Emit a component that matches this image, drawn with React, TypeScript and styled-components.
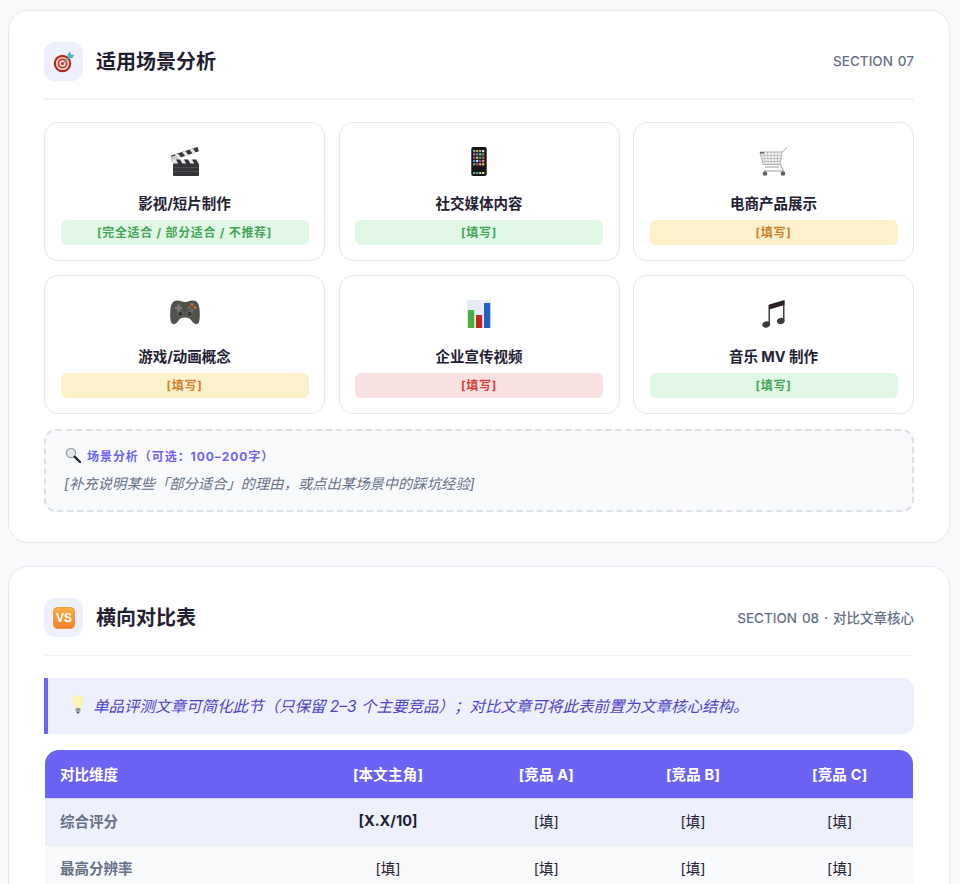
import * as React from 'react'
import styled, { createGlobalStyle } from 'styled-components'

const GlobalStyle = createGlobalStyle`
  html, body {
    margin: 0;
    height: 884px;
    overflow: hidden;
    background: #f8f9fb;
  }
  body {
    font-family: Inter, "Noto Sans CJK SC", sans-serif;
    color: #1f2133;
  }
`

const Page = styled.div`
  display: flex;
  flex-direction: column;
  gap: 23px;
  padding: 10px 10px 0 8px;
`

const Card = styled.section`
  background: #fff;
  border: 1px solid #e6e9f1;
  border-radius: 20px;
  padding: 31px 35px 30px;
`

const Header = styled.header`
  display: flex;
  align-items: center;
  gap: 13px;
  padding-bottom: 17px;
  border-bottom: 2px solid #f1f3f7;
  margin-bottom: 22px;
`

const HeaderThin = styled(Header)`
  padding-bottom: 17.5px;
  border-bottom-width: 1.5px;
`

const IconBox = styled.div`
  width: 39px;
  height: 39px;
  border-radius: 11px;
  background: #eef0fd;
  display: flex;
  align-items: center;
  justify-content: center;
`

const Title = styled.h2`
  margin: 0;
  padding-top: 2px;
  font-size: 20px;
  line-height: 37px;
  font-weight: 700;
  color: #1f2133;
`

const SectionTag = styled.span`
  margin-left: auto;
  padding-bottom: 2px;
  font-size: 13.5px;
  font-weight: 500;
  word-spacing: 1.3px;
  color: #667087;
`

const SceneGrid = styled.div`
  display: grid;
  grid-template-columns: repeat(3, 1fr);
  gap: 13.5px;
`

const SceneCard = styled.div`
  border: 1px solid #e6e9f1;
  border-radius: 14px;
  height: 139px;
  box-sizing: border-box;
  padding: 24px 15.5px 0;
  display: flex;
  flex-direction: column;
  align-items: center;
`

const SceneIcon = styled.div`
  width: 30px;
  height: 30px;
  display: flex;
  align-items: flex-start;
  justify-content: center;
`

const SceneName = styled.div`
  margin-top: 17px;
  font-size: 14.5px;
  line-height: 20px;
  font-weight: 700;
  color: #1f2133;
`

const tones = {
  good: { bg: '#e1f8e7', fg: '#46a558' },
  mid: { bg: '#fdf1cc', fg: '#d0812c' },
  bad: { bg: '#f9e1e1', fg: '#d83f3f' },
}

type Tone = keyof typeof tones

const Badge = styled.div<{ $tone: Tone }>`
  margin-top: 6px;
  align-self: stretch;
  height: 25px;
  line-height: 25px;
  border-radius: 6px;
  text-align: center;
  font-size: 12px;
  font-weight: 700;
  letter-spacing: 0.7px;
  background: ${p => tones[p.$tone].bg};
  color: ${p => tones[p.$tone].fg};
`

const Note = styled.div`
  margin-top: 15.5px;
  height: 83px;
  box-sizing: border-box;
  border: 2px dashed #dde0e9;
  border-radius: 12px;
  background: #f9fafc;
  padding: 14px 19px 0;
`

const NoteHead = styled.div`
  display: flex;
  align-items: center;
  gap: 6px;
  height: 20px;
  font-size: 12px;
  font-weight: 700;
  letter-spacing: 0.95px;
  color: #6c63f8;
`

const NoteBody = styled.div`
  margin: 8px 0 0 -1px;
  font-size: 14.3px;
  line-height: 22px;
  font-style: italic;
  color: #667087;
`

const Callout = styled.div`
  height: 56px;
  box-sizing: border-box;
  display: flex;
  align-items: center;
  gap: 9px;
  padding: 0 0 2px 24px;
  background: #eef0fd;
  border-left: 4.5px solid #6b63f6;
  border-radius: 0 12px 12px 0;
  font-size: 15.5px;
  font-style: italic;
  color: #4d44cc;
`

const TableWrap = styled.div`
  margin: 16px 1px 0;
  border-radius: 14px 14px 0 0;
  overflow: hidden;
`

const Table = styled.table`
  width: 100%;
  table-layout: fixed;
  border-collapse: separate;
  border-spacing: 0;
  font-size: 14.5px;
`

const HeadCell = styled.th`
  box-sizing: border-box;
  height: 49px;
  padding: 0 0 1px;
  background: #6b63f6;
  color: #fff;
  font-weight: 700;
  letter-spacing: 0.2px;
  text-align: center;
  border-bottom: 1px solid #d8d6fb;
`

const HeadFirst = styled(HeadCell)`
  padding-left: 15px;
  text-align: left;
  letter-spacing: 0;
`

const Row = styled.tr<{ $alt?: boolean }>`
  background: ${p => (p.$alt ? '#f9fafc' : '#eef0fc')};
`

const Cell = styled.td<{ $strong?: boolean }>`
  box-sizing: border-box;
  height: 47px;
  padding: 0 0 2px;
  text-align: center;
  color: #1f2133;
  font-weight: ${p => (p.$strong ? 700 : 400)};
  border-bottom: 1px solid #e6e9f1;
`

const RowLabel = styled.td`
  box-sizing: border-box;
  height: 47px;
  padding: 0 0 2px 15px;
  font-weight: 700;
  color: #667087;
  border-bottom: 1px solid #e6e9f1;
`

const TargetIcon = () => (
  <svg width="22" height="22" viewBox="0 0 22 22">
    <circle cx="9.5" cy="12.5" r="8.7" fill="#b8271f" />
    <circle cx="9.5" cy="12.5" r="6.6" fill="#efd9d0" />
    <circle cx="9.5" cy="12.5" r="5" fill="#cb3a31" />
    <circle cx="9.5" cy="12.5" r="3.2" fill="#f3e4dc" />
    <circle cx="9.5" cy="12.5" r="1.6" fill="#c5302a" />
    <path d="M10 12L18 5" stroke="#7f9296" strokeWidth="1.5" />
    <path d="M14.5 3.5L17 .5l1 3 3.5 .5-2.5 3.500-3.500-.5z" fill="#4db3bd" />
  </svg>
)

const VsIcon = () => (
  <svg width="22" height="22" viewBox="0 0 22 22">
    <defs>
      <linearGradient id="vsFill" x1="0" y1="0" x2="0" y2="1">
        <stop offset="0" stopColor="#fbb040" />
        <stop offset="1" stopColor="#f2812a" />
      </linearGradient>
    </defs>
    <rect x="0.5" y="0.5" width="21" height="21" rx="4" fill="url(#vsFill)" stroke="#e89a3c" />
    <text x="11" y="15.200" textAnchor="middle" fontSize="12" fontWeight="700" fontFamily="Liberation Sans, sans-serif" fill="#fff">VS</text>
  </svg>
)

const ClapperIcon = () => (
  <svg width="30" height="29" viewBox="0 0 30 29">
    <path d="M1 8.500L27.500 0l1.300 4.300L2.500 13.300z" fill="#37373b" />
    <path d="M4.500 7.400l3.300-1 3.400 4.200-3.300 1.100zM12 5l3.300-1 3.400 4.200-3.300 1.100zM19.500 2.600l3.300-1 3.400 4.200-3.300 1.100z" fill="#e4e4e4" />
    <circle cx="4.800" cy="12.500" r="3.800" fill="#c8cac8" />
    <rect x="3" y="12.500" width="26" height="4.500" fill="#e4e4e4" />
    <path d="M6 12.500h4l2.500 4.500h-4zM14 12.500h4l2.500 4.500h-4zM22 12.500h4l2.500 4.500h-4z" fill="#2f2f33" />
    <rect x="3" y="16.500" width="26" height="12.500" rx="1" fill="#343438" />
    <path d="M3 20.500h26M3 24.500h26" stroke="#5b5b60" strokeWidth="0.7" />
  </svg>
)

const appColors = [
  '#5fc0e8', '#e9a23b', '#6fcf6a', '#d9d9d9',
  '#f06292', '#4f8fe0', '#9ccc65', '#8d8d8d',
  '#ab47bc', '#f4c542', '#26a69a', '#ef5350',
  '#42a5f5', '#e0e0e0', '#7e57c2', '#ff8a65',
  '#66bb6a', '#ec407a', '#bdbdbd', '#ffca28',
]

const PhoneIcon = () => (
  <svg width="16" height="29" viewBox="0 0 16 29">
    <rect x="0.3" y="0" width="15.4" height="29" rx="2" fill="#17171a" />
    {appColors.map((color, i) => (
      <rect key={i} x={2.1 + (i % 4) * 3} y={3 + Math.floor(i / 4) * 3.3} width="2.2" height="2.2" fill={color} />
    ))}
    <rect x="2.1" y="25" width="2.2" height="2" fill="#66bb6a" />
    <rect x="5.1" y="25" width="2.2" height="2" fill="#42a5f5" />
    <rect x="8.1" y="25" width="2.2" height="2" fill="#ffca28" />
    <rect x="11.1" y="25" width="2.2" height="2" fill="#e0e0e0" />
  </svg>
)

const CartIcon = () => (
  <svg width="29" height="29" viewBox="0 0 29 29">
    <path d="M1 5h22l-2 12.500H4z" fill="#f2f2f2" stroke="#9a9a9a" strokeWidth="0.8" />
    <path d="M1.600 8.500h20.800M2.200 11.500h19.700M3 14.500h18.400M5 5l1 12.500M8.500 5l.7 12.500M12 5v12.500M15.500 5l-.4 12.500M19 5l-.8 12.500" stroke="#a8a8a8" strokeWidth="0.6" fill="none" />
    <path d="M23 5L28 0.500" stroke="#a8a8a8" strokeWidth="1" />
    <path d="M21 17.500c2 3 3 4 3 6.500H5M6 20h14" stroke="#9d9d9d" strokeWidth="1.100" fill="none" />
    <rect x="1" y="5" width="4" height="1.600" fill="#5a6a7a" />
    <circle cx="6" cy="26.500" r="2.300" fill="#66625e" />
    <circle cx="24" cy="26.500" r="2.300" fill="#66625e" />
  </svg>
)

const GamepadIcon = () => (
  <svg width="30" height="25" viewBox="0 0 30 25">
    <path d="M7.500 .5c3 0 4.500 1.500 7.500 1.500s4.500-1.500 7.500-1.500c4.500 0 6.500 3 7 8.500.5 5.500 .5 11.500-1 14-1.500 2-4.500 1.500-7-2.500-1.300-2-3-3-6.500-3s-5.200 1-6.500 3c-2.500 4-5.500 4.500-7 2.500-1.500-2.500-1.500-8.500-1-14 .5-5.500 2.500-8.500 7-8.500z" fill="#51514c" />
    <path d="M7.300 4.500h2.400v2.300H12v2.400H9.700v2.300H7.300V9.200H5V6.800h2.300z" fill="#7d7d78" />
    <circle cx="22" cy="4.600" r="1.500" fill="#d96a2b" />
    <circle cx="25" cy="7.500" r="1.500" fill="#d96a2b" />
    <circle cx="19.200" cy="7.500" r="1.500" fill="#73736e" />
    <circle cx="22" cy="10.300" r="1.500" fill="#73736e" />
    <circle cx="10.500" cy="14" r="2.700" fill="#35352f" stroke="#777772" strokeWidth="0.8" />
    <circle cx="19.500" cy="14" r="2.700" fill="#35352f" stroke="#777772" strokeWidth="0.8" />
  </svg>
)

const ChartIcon = () => (
  <svg width="24" height="28" viewBox="0 0 24 28">
    <rect x="0" y="0" width="24" height="28" fill="#e6eaf1" />
    <rect x="1" y="10" width="6.200" height="18" fill="#45b03e" />
    <rect x="9" y="15" width="6.200" height="13" fill="#c2281f" />
    <rect x="17" y="3" width="6.200" height="25" fill="#2160c4" />
  </svg>
)

const MusicIcon = () => (
  <svg width="23" height="28" viewBox="0 0 23 28">
    <path d="M7.200 4.500L22.500 0v5L7.200 9.500z" fill="#2a2226" />
    <path d="M7.200 5v19M21.800 1v19" stroke="#2a2226" strokeWidth="1.300" />
    <ellipse cx="4.200" cy="24.500" rx="3.900" ry="3" fill="#3a3a40" transform="rotate(-15 4.200 24.500)" />
    <ellipse cx="18.800" cy="21" rx="3.900" ry="3" fill="#3a3a40" transform="rotate(-15 18.800 21)" />
  </svg>
)

const LensIcon = () => (
  <svg width="16" height="16" viewBox="0 0 16 16">
    <circle cx="6" cy="6" r="4.600" fill="#dfe6ee" stroke="#9aa0a8" strokeWidth="1.300" />
    <path d="M9.800 9.800L15 15" stroke="#26262a" strokeWidth="2.400" strokeLinecap="round" />
  </svg>
)

const BulbIcon = () => (
  <svg width="12" height="19" viewBox="0 0 12 19">
    <path d="M6 .5c3.200 0 5.500 2.300 5.500 5.300 0 2.700-2.200 4.200-2.800 7H3.300C2.700 10 .5 8.500 .5 5.800 .5 2.800 2.800 .5 6 .5z" fill="#fdf3b4" stroke="#f1e6a2" strokeWidth="0.500" />
    <rect x="3.500" y="13" width="5" height="3.500" rx="1" fill="#9a9a9e" />
    <rect x="4.600" y="16.500" width="2.800" height="2" rx="1" fill="#55555a" />
  </svg>
)

type Scene = { name: string, status: string, tone: Tone, icon: React.ReactNode }

const scenes: Scene[] = [
  { name: '影视/短片制作', status: '[完全适合 / 部分适合 / 不推荐]', tone: 'good', icon: <ClapperIcon /> },
  { name: '社交媒体内容', status: '[填写]', tone: 'good', icon: <PhoneIcon /> },
  { name: '电商产品展示', status: '[填写]', tone: 'mid', icon: <CartIcon /> },
  { name: '游戏/动画概念', status: '[填写]', tone: 'mid', icon: <GamepadIcon /> },
  { name: '企业宣传视频', status: '[填写]', tone: 'bad', icon: <ChartIcon /> },
  { name: '音乐 MV 制作', status: '[填写]', tone: 'good', icon: <MusicIcon /> },
]

export default function App() {
  return (
    <Page>
      <GlobalStyle />
      <Card>
        <Header>
          <IconBox><TargetIcon /></IconBox>
          <Title>适用场景分析</Title>
          <SectionTag>SECTION 07</SectionTag>
        </Header>
        <SceneGrid>
          {scenes.map(scene => (
            <SceneCard key={scene.name}>
              <SceneIcon>{scene.icon}</SceneIcon>
              <SceneName>{scene.name}</SceneName>
              <Badge $tone={scene.tone}>{scene.status}</Badge>
            </SceneCard>
          ))}
        </SceneGrid>
        <Note>
          <NoteHead><LensIcon />场景分析（可选：100–200字）</NoteHead>
          <NoteBody>[补充说明某些「部分适合」的理由，或点出某场景中的踩坑经验]</NoteBody>
        </Note>
      </Card>
      <Card>
        <HeaderThin>
          <IconBox><VsIcon /></IconBox>
          <Title>横向对比表</Title>
          <SectionTag>SECTION 08 · 对比文章核心</SectionTag>
        </HeaderThin>
        <Callout>
          <BulbIcon />
          单品评测文章可简化此节（只保留 2–3 个主要竞品）；对比文章可将此表前置为文章核心结构。
        </Callout>
        <TableWrap>
          <Table>
            <colgroup>
              <col style={{ width: 258 }} />
              <col style={{ width: 170 }} />
              <col />
              <col />
              <col />
            </colgroup>
            <thead>
              <tr>
                <HeadFirst>对比维度</HeadFirst>
                <HeadCell>[本文主角]</HeadCell>
                <HeadCell>[竞品 A]</HeadCell>
                <HeadCell>[竞品 B]</HeadCell>
                <HeadCell>[竞品 C]</HeadCell>
              </tr>
            </thead>
            <tbody>
              <Row>
                <RowLabel>综合评分</RowLabel>
                <Cell $strong>[X.X/10]</Cell>
                <Cell>[填]</Cell>
                <Cell>[填]</Cell>
                <Cell>[填]</Cell>
              </Row>
              <Row $alt>
                <RowLabel>最高分辨率</RowLabel>
                <Cell>[填]</Cell>
                <Cell>[填]</Cell>
                <Cell>[填]</Cell>
                <Cell>[填]</Cell>
              </Row>
            </tbody>
          </Table>
        </TableWrap>
      </Card>
    </Page>
  )
}
